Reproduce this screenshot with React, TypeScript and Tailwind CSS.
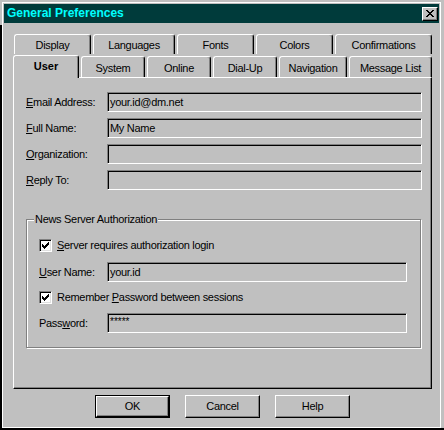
import React from 'react';

const backTabs = [
  { label: 'Display', w: 'w-[77px]' },
  { label: 'Languages', w: 'w-[82px]' },
  { label: 'Fonts', w: 'w-[77px]' },
  { label: 'Colors', w: 'w-[77px]' },
  { label: 'Confirmations', w: 'w-[97px]' },
];

const frontTabs = [
  { label: 'System', w: 'w-[64px]' },
  { label: 'Online', w: 'w-[64px]' },
  { label: 'Dial-Up', w: 'w-[64px]' },
  { label: 'Navigation', w: 'w-[68px]' },
  { label: 'Message List', w: 'w-[83px]' },
];

const CHECK = ['......#', '.....##', '#...###', '##.###.', '#####..', '.###...', '..#....'];
const CROSS = ['##....##', '.##..##.', '..####..', '...##...', '..####..', '.##..##.', '##....##'];

const Pixels = ({ rows }: { rows: string[] }) => (
  <svg width={rows[0].length} height={rows.length} shapeRendering="crispEdges">
    {rows.flatMap((row, y) =>
      row.split('').map((c, x) => (c === '#' ? <rect key={`${x}-${y}`} x={x} y={y} width={1} height={1} fill="#000" /> : null))
    )}
  </svg>
);

const tabBase =
  'flex justify-center rounded-t-[3px] border-x border-t border-t-white border-l-white border-r-black shadow-[inset_-1px_0_0_#808080] bg-[#c0c0c0]';

const Field = ({ w, children, stars }: { w: string; children?: React.ReactNode; stars?: boolean }) => (
  <div
    className={`${w} h-[20px] flex ${stars ? 'items-start pt-[1px] text-[10px] tracking-normal' : 'items-center'} pl-[2px] border border-t-[#808080] border-l-[#808080] border-r-white border-b-white shadow-[inset_1px_1px_0_#000] whitespace-nowrap`}
  >
    {children}
  </div>
);

const Check = () => (
  <div className="w-[13px] h-[13px] shrink-0 flex items-center justify-center bg-white border border-t-[#808080] border-l-[#808080] border-r-white border-b-white shadow-[inset_1px_1px_0_#000,inset_-1px_-1px_0_#dfdfdf]">
    <Pixels rows={CHECK} />
  </div>
);

const Button = ({ label, isDefault }: { label: string; isDefault?: boolean }) => {
  const face = (
    <div className="flex-1 flex items-center justify-center border border-t-white border-l-white border-r-black border-b-black shadow-[inset_-1px_-1px_0_#808080]">
      {label}
    </div>
  );
  return isDefault ? (
    <div className="w-[75px] h-[23px] flex border border-black">{face}</div>
  ) : (
    <div className="w-[75px] h-[23px] flex">{face}</div>
  );
};

export default function App() {
  return (
    <div className="w-[444px] h-[430px] flex flex-col bg-[#c0c0c0] text-black text-[11px] tracking-[-0.3px] font-['Liberation_Sans',Arial,sans-serif] leading-[13px]">
      <div className="h-[428px] flex">
        <div className="w-[2px] flex flex-col">
          <div className="h-[25px]" />
          <div className="flex-1 bg-black" />
        </div>

        <div className="w-[439px] mt-[2px] h-[426px] border border-white p-[1px] flex flex-col">
          {/* title bar */}
          <div className="h-[19px] shrink-0 bg-[#003b3b] flex items-center justify-between pl-[3px] pr-[1px]">
            <span className="text-[12px] font-bold tracking-normal text-[#00ffff]">General Preferences</span>
            <div className="w-[16px] h-[14px] flex items-center justify-center bg-[#c0c0c0] border border-t-white border-l-white border-r-black border-b-black shadow-[inset_-1px_-1px_0_#808080]">
              <Pixels rows={CROSS} />
            </div>
          </div>

          {/* tabs */}
          <div className="mt-[11px] h-[20px] flex gap-[2px] pl-[10px]">
            {backTabs.map((t) => (
              <div key={t.label} className={`${tabBase} ${t.w} h-[20px] items-center pt-[2px]`}>
                {t.label}
              </div>
            ))}
          </div>
          <div className="mt-[1px] h-[22px] flex items-end gap-[2px] pl-[9px]">
            <div className={`${tabBase} relative z-10 w-[66px] h-[23px] -mb-[1px] items-center pb-[1px] font-bold tracking-normal`}>
              User
            </div>
            {frontTabs.map((t) => (
              <div key={t.label} className={`${tabBase} ${t.w} h-[21px] items-center pt-[2px]`}>
                {t.label}
              </div>
            ))}
          </div>

          {/* panel */}
          <div className="ml-[9px] w-[419px] h-[312px] flex flex-col pl-[12px] pt-[14px] border border-t-white border-l-white border-r-black border-b-black shadow-[inset_-1px_-1px_0_#808080]">
            <div className="flex flex-col gap-[6px]">
              <div className="flex items-center">
                <span className="w-[81px]"><u>E</u>mail Address:</span>
                <Field w="w-[315px]">your.id@dm.net</Field>
              </div>
              <div className="flex items-center">
                <span className="w-[81px]"><u>F</u>ull Name:</span>
                <Field w="w-[315px]">My Name</Field>
              </div>
              <div className="flex items-center">
                <span className="w-[81px]"><u>O</u>rganization:</span>
                <Field w="w-[315px]" />
              </div>
              <div className="flex items-center">
                <span className="w-[81px]"><u>R</u>eply To:</span>
                <Field w="w-[315px]" />
              </div>
            </div>

            {/* group box */}
            <div className="relative mt-[29px] w-[395px] h-[129px] flex flex-col pl-[12px] pt-[19px] border border-[#808080] shadow-[inset_1px_1px_0_#fff,1px_1px_0_#fff]">
              <span className="absolute left-[7px] -top-[7px] px-[1px] bg-[#c0c0c0]">News Server Authorization</span>
              <div className="h-[13px] flex items-center">
                <Check />
                <span className="ml-[5px]"><u>S</u>erver requires authorization login</span>
              </div>
              <div className="mt-[10px] flex items-center">
                <span className="w-[68px]"><u>U</u>ser Name:</span>
                <Field w="w-[300px]">your.id</Field>
              </div>
              <div className="mt-[9px] h-[13px] flex items-center">
                <Check />
                <span className="ml-[5px]">Remember <u>P</u>assword between sessions</span>
              </div>
              <div className="mt-[9px] flex items-center">
                <span className="w-[68px]">Pass<u>w</u>ord:</span>
                <Field w="w-[300px]" stars>*****</Field>
              </div>
            </div>
          </div>

          {/* buttons */}
          <div className="mt-[6px] flex justify-center gap-[15px] pl-[2px]">
            <Button label="OK" isDefault />
            <Button label="Cancel" />
            <Button label="Help" />
          </div>
        </div>

        <div className="w-[3px]" />
      </div>
      <div className="h-[2px] bg-black" />
    </div>
  );
}
